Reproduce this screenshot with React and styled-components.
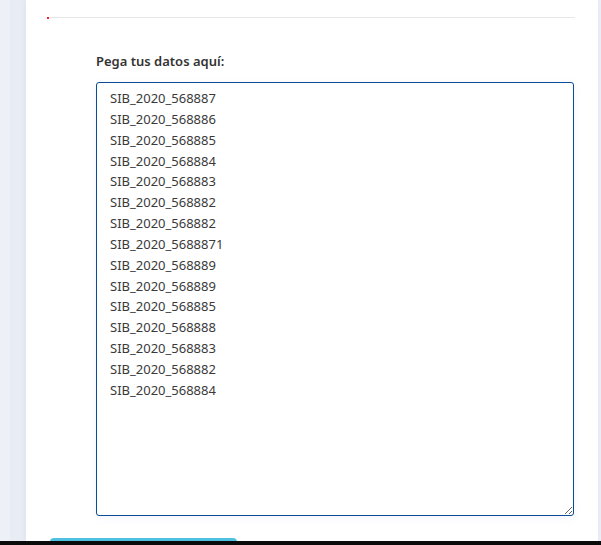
import React from 'react';
import styled, { createGlobalStyle } from 'styled-components';

const GlobalStyle = createGlobalStyle`
  html, body {
    margin: 0;
    padding: 0;
    background: #f8f9fb;
    font-family: "Noto Sans", "Open Sans", sans-serif;
  }
`;

const Screen = styled.div`
  height: 545px;
  display: flex;
  flex-direction: column;
  overflow: hidden;
`;

const Main = styled.div`
  flex: 1;
  min-height: 0;
  display: flex;
  padding-left: 10px;
  overflow: hidden;
  background: #eef0f8;
`;

const SideStrip = styled.div`
  width: 16px;
  flex-shrink: 0;
  background: #e8ecf4;
`;

const Card = styled.div`
  flex: 1;
  margin-right: 3px;
  background: #ffffff;
  box-shadow: 0 0 6px rgba(60, 80, 140, 0.08);
  padding: 17px 23px 0 21px;
`;

const Divider = styled.div`
  position: relative;
  height: 1px;
  background: #e4e6ea;
  &::before {
    content: '';
    position: absolute;
    left: 0;
    top: 0;
    width: 2px;
    height: 2px;
    background: #ff1f1f;
  }
`;

const Form = styled.div`
  padding: 34px 0 0 49px;
  display: flex;
  flex-direction: column;
`;

const Label = styled.label`
  font-size: 13px;
  font-weight: 600;
  color: #333333;
  line-height: 18px;
  margin-bottom: 12px;
`;

const DataArea = styled.textarea`
  box-sizing: border-box;
  width: 478px;
  height: 434px;
  margin: 0;
  padding: 5px 13px;
  border: 1px solid #0b4c97;
  border-radius: 3px;
  font-family: "Noto Sans", "Open Sans", sans-serif;
  font-size: 13px;
  line-height: 20.85px;
  color: #3a3a3a;
  background: #ffffff;
  box-shadow: 0 2px 8px rgba(90, 110, 220, 0.07);
  outline: none;
  resize: both;
`;

const SubmitButton = styled.button`
  width: 187px;
  height: 40px;
  margin: 22px 0 0 -46px;
  border: none;
  border-radius: 4px;
  background: #4ec0e1;
`;

const BottomEdge = styled.div`
  height: 4px;
  flex-shrink: 0;
  background: #0b0b0b;
`;

const codes = [
  'SIB_2020_568887',
  'SIB_2020_568886',
  'SIB_2020_568885',
  'SIB_2020_568884',
  'SIB_2020_568883',
  'SIB_2020_568882',
  'SIB_2020_568882',
  'SIB_2020_5688871',
  'SIB_2020_568889',
  'SIB_2020_568889',
  'SIB_2020_568885',
  'SIB_2020_568888',
  'SIB_2020_568883',
  'SIB_2020_568882',
  'SIB_2020_568884',
];

const App = () => (
  <>
    <GlobalStyle />
    <Screen>
      <Main>
        <SideStrip />
        <Card>
          <Divider />
          <Form>
            <Label htmlFor="datos">Pega tus datos aquí:</Label>
            <DataArea id="datos" defaultValue={codes.join('\n')} />
            <SubmitButton type="button" aria-label="Procesar" />
          </Form>
        </Card>
      </Main>
      <BottomEdge />
    </Screen>
  </>
);

export default App;
